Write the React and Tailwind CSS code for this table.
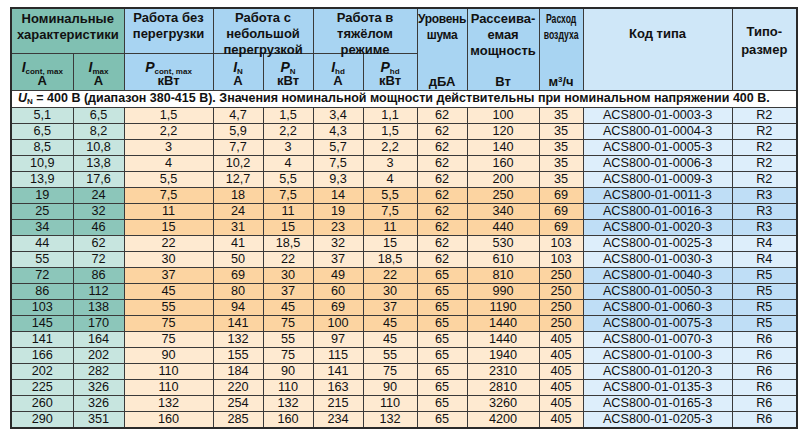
const rows = [
  ["5,1", "6,5", "1,5", "4,7", "1,5", "3,4", "1,1", "62", "100", "35", "ACS800-01-0003-3", "R2"],
  ["6,5", "8,2", "2,2", "5,9", "2,2", "4,3", "1,5", "62", "120", "35", "ACS800-01-0004-3", "R2"],
  ["8,5", "10,8", "3", "7,7", "3", "5,7", "2,2", "62", "140", "35", "ACS800-01-0005-3", "R2"],
  ["10,9", "13,8", "4", "10,2", "4", "7,5", "3", "62", "160", "35", "ACS800-01-0006-3", "R2"],
  ["13,9", "17,6", "5,5", "12,7", "5,5", "9,3", "4", "62", "200", "35", "ACS800-01-0009-3", "R2"],
  ["19", "24", "7,5", "18", "7,5", "14", "5,5", "62", "250", "69", "ACS800-01-0011-3", "R3"],
  ["25", "32", "11", "24", "11", "19", "7,5", "62", "340", "69", "ACS800-01-0016-3", "R3"],
  ["34", "46", "15", "31", "15", "23", "11", "62", "440", "69", "ACS800-01-0020-3", "R3"],
  ["44", "62", "22", "41", "18,5", "32", "15", "62", "530", "103", "ACS800-01-0025-3", "R4"],
  ["55", "72", "30", "50", "22", "37", "18,5", "62", "610", "103", "ACS800-01-0030-3", "R4"],
  ["72", "86", "37", "69", "30", "49", "22", "65", "810", "250", "ACS800-01-0040-3", "R5"],
  ["86", "112", "45", "80", "37", "60", "30", "65", "990", "250", "ACS800-01-0050-3", "R5"],
  ["103", "138", "55", "94", "45", "69", "37", "65", "1190", "250", "ACS800-01-0060-3", "R5"],
  ["145", "170", "75", "141", "75", "100", "45", "65", "1440", "250", "ACS800-01-0075-3", "R5"],
  ["141", "164", "75", "132", "55", "97", "45", "65", "1440", "405", "ACS800-01-0070-3", "R6"],
  ["166", "202", "90", "155", "75", "115", "55", "65", "1940", "405", "ACS800-01-0100-3", "R6"],
  ["202", "282", "110", "184", "90", "141", "75", "65", "2310", "405", "ACS800-01-0120-3", "R6"],
  ["225", "326", "110", "220", "110", "163", "90", "65", "2810", "405", "ACS800-01-0135-3", "R6"],
  ["260", "326", "132", "254", "132", "215", "110", "65", "3260", "405", "ACS800-01-0165-3", "R6"],
  ["290", "351", "160", "285", "160", "234", "132", "65", "4200", "405", "ACS800-01-0205-3", "R6"],
]

// R3 and R5 frames are shaded darker
const darkFrames = ["R3", "R5"]

const cell = "border border-[#3a3a3a] p-0 text-center"

function cellColor(col, dark) {
  if (col < 2) return dark ? "bg-[#8cc6ba]" : "bg-[#c7e5df]"
  if (col < 10) return dark ? "bg-[#fcd4a1]" : "bg-[#feead1]"
  return dark ? "bg-[#bfdef6]" : "bg-[#ddeefb]"
}

function GroupHead({ children, bg, span = 1 }) {
  return (
    <th colSpan={span} className={`${cell} ${bg} align-top`}>
      <div className="h-[41px] pt-[1px] leading-[16px] text-[13px]">{children}</div>
    </th>
  )
}

function SubHead({ letter, sub, unit, bg }) {
  return (
    <th className={`${cell} ${bg} align-top pt-[6px]`}>
      <div className="leading-[14px] h-[14px]">
        <i className="font-bold text-[14px]">{letter}</i>
        <span className="text-[8px] leading-none font-bold relative top-[2px]">{sub}</span>
      </div>
      <div className="text-[13px] font-bold leading-[14px]">{unit}</div>
    </th>
  )
}

function TallHead({ children, unit, bg }) {
  return (
    <th rowSpan={2} className={`${cell} ${bg} align-top`}>
      <div className="h-[81px] flex flex-col justify-between items-center pt-[2px] pb-[1px]">
        <div>{children}</div>
        <div className="text-[13px] leading-[14px]">{unit}</div>
      </div>
    </th>
  )
}

export default function App() {
  const blue = "bg-[#a8d4f2]"
  const teal = "bg-[#80c0b2]"
  const pale = "bg-[#cfe7f8]"

  return (
    <div className="w-[800px] h-[434px] bg-white pl-[10px] pt-[7px] text-[#111]" style={{ fontFamily: '"Liberation Sans", Arial, sans-serif' }}>
      <table className="table-fixed border-collapse border-2 border-[#2a2a2a] w-[786px]">
        <colgroup>
          <col className="w-[62px]" />
          <col className="w-[51px]" />
          <col className="w-[89px]" />
          <col className="w-[50px]" />
          <col className="w-[50px]" />
          <col className="w-[50px]" />
          <col className="w-[54px]" />
          <col className="w-[50px]" />
          <col className="w-[72px]" />
          <col className="w-[44px]" />
          <col className="w-[149px]" />
          <col className="w-[65px]" />
        </colgroup>
        <thead className="font-bold">
          <tr className="h-[44px]">
            <GroupHead bg={teal} span={2}>
              <div className="pt-[1px]">Номинальные<br />характеристики</div>
            </GroupHead>
            <GroupHead bg={blue}>Работа без<br />перегрузки</GroupHead>
            <GroupHead bg={blue} span={2}>Работа с<br />небольшой<br />перегрузкой</GroupHead>
            <GroupHead bg={blue} span={2}>Работа в<br />тяжёлом<br />режиме</GroupHead>
            <TallHead bg={blue} unit="дБА">
              <div className="text-[12px] leading-[16px] tracking-[-0.3px]">Уровень<br />шума</div>
            </TallHead>
            <TallHead bg={blue} unit="Вт">
              <div className="text-[13px] leading-[16px]">Рассеива-<br />емая<br />мощность</div>
            </TallHead>
            <TallHead bg={blue} unit={<span>м<sup className="text-[8px]">3</sup>/ч</span>}>
              <div className="text-[12px] leading-[16px] inline-block scale-x-[0.72] whitespace-nowrap">Расход<br />воздуха</div>
            </TallHead>
            <th rowSpan={2} className={`${cell} ${pale} align-top pt-[17px] text-[13px] leading-[16px]`}>
              Код типа
            </th>
            <th rowSpan={2} className={`${cell} ${pale} align-top pt-[14px] text-[13px] leading-[18px]`}>
              Типо-<br />размер
            </th>
          </tr>
          <tr className="h-[36px]">
            <SubHead bg={teal} letter="I" sub="cont, max" unit="A" />
            <SubHead bg={teal} letter="I" sub="max" unit="A" />
            <SubHead bg={blue} letter="P" sub="cont, max" unit="кВт" />
            <SubHead bg={blue} letter="I" sub="N" unit="A" />
            <SubHead bg={blue} letter="P" sub="N" unit="кВт" />
            <SubHead bg={blue} letter="I" sub="hd" unit="A" />
            <SubHead bg={blue} letter="P" sub="hd" unit="кВт" />
          </tr>
        </thead>
        <tbody className="text-[12.7px] leading-[15px]">
          <tr className="h-[17px]">
            <td colSpan={12} className={`${cell} bg-white text-left pl-[6px] font-bold text-[12.5px] whitespace-nowrap`}>
              <i>U</i><span className="text-[8px] relative top-[2px]">N</span> = 400 В (диапазон 380-415 В). Значения номинальной мощности действительны при номинальном напряжении 400 В.
            </td>
          </tr>
          {rows.map((r) => {
            const dark = darkFrames.includes(r[11])
            return (
              <tr key={r[10]} className="h-[16px]">
                {r.map((v, i) => (
                  <td key={i} className={`${cell} ${cellColor(i, dark)}`}>
                    {v}
                  </td>
                ))}
              </tr>
            )
          })}
        </tbody>
      </table>
    </div>
  )
}
